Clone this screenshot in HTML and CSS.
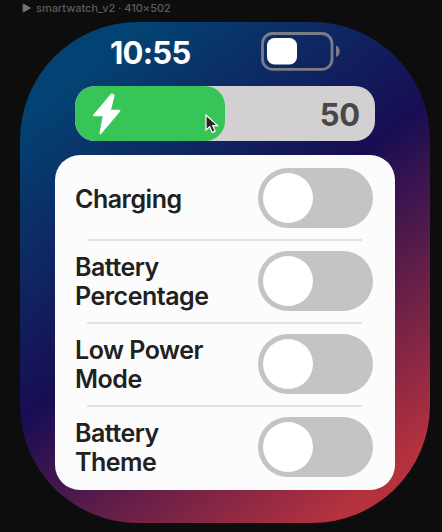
FILE: index.html
```html
<!DOCTYPE html>
<html lang="en">
<head>
<meta charset="utf-8">
<title>Smartwatch battery</title>
<link rel="stylesheet" href="styles.css">
</head>
<body>
<header class="frame-label">
  <svg class="play" viewBox="0 0 10 12"><path d="M1.2 2 8.3 6 1.2 10Z" fill="#747474" stroke="#747474" stroke-linejoin="round"/></svg>
  <span class="frame-name">smartwatch_v2 · 410×502</span>
</header>
<main class="watch">
  <div class="status">
    <time class="clock">10:55</time>
    <svg class="battery" viewBox="0 0 80 40">
      <rect x="1.5" y="1.5" width="69.5" height="35.8" rx="10" fill="none" stroke="#7c7c86" stroke-width="2.8"/>
      <rect x="6" y="6" width="30" height="26.5" rx="7.5" fill="#fff"/>
      <path d="M75 13.5C80 15.5 80 23 75 25Z" fill="#7c7c86"/>
    </svg>
  </div>
  <div class="level">
    <div class="level-fill">
      <svg class="bolt" viewBox="0 0 28 42"><path d="M18.8 1.3 1 22.3H10.8L7.5 40.2 26.3 17.8H16.8L20.6 2.5Z" fill="#fff" stroke="#fff" stroke-width="2" stroke-linejoin="round"/></svg>
    </div>
    <span class="level-value">50</span>
  </div>
  <section class="card">
    <div class="row"><span class="name">Charging</span><span class="toggle"></span></div>
    <div class="row"><span class="name">Battery<br>Percentage</span><span class="toggle"></span></div>
    <div class="row"><span class="name">Low Power<br>Mode</span><span class="toggle"></span></div>
    <div class="row"><span class="name">Battery<br>Theme</span><span class="toggle"></span></div>
  </section>
</main>
<svg class="cursor" viewBox="0 0 14 20"><path d="M1 1V16L4.7 12.7 7.3 18.4 10.2 17.1 7.7 11.6H12.5Z" fill="#2b2328" stroke="#fff" stroke-width="1.2"/></svg>
</body>
</html>
```
FILE: styles.css
```css
* { box-sizing: border-box; }
body {
  margin: 0;
  width: 442px;
  height: 532px;
  overflow: hidden;
  background: #0d0d0d;
  font-family: Inter, "Liberation Sans", sans-serif;
}
svg { display: block; }
.frame-label {
  display: flex;
  align-items: center;
  gap: 4px;
  height: 22px;
  padding: 0 0 6px 22px;
  color: #5c5c5c;
  font-size: 11px;
  font-weight: 500;
  letter-spacing: -0.03px;
  line-height: 16px;
}
.play { width: 10px; height: 12px; }
.watch {
  width: 410px;
  height: 501px;
  margin-left: 20px;
  padding: 10px 35px 0;
  border-radius: 118px;
  background: linear-gradient(142deg, #034373 12%, #180d53 48.5%, #b5313e 90%);
}
.status {
  display: flex;
  justify-content: space-between;
  height: 54.4px;
  padding: 0 54px 0 55px;
}
.clock {
  color: #fff;
  font-size: 31px;
  font-weight: 650;
  letter-spacing: -0.75px;
  line-height: 42px;
}
.battery { width: 80px; height: 40px; }
.level {
  display: flex;
  align-items: center;
  justify-content: space-between;
  width: 300px;
  height: 55px;
  margin-left: 20px;
  padding-right: 15px;
  border-radius: 20px;
  background: #d2d0d1;
  overflow: hidden;
}
.level-fill {
  display: flex;
  align-items: center;
  width: 150px;
  height: 55px;
  padding-left: 17.5px;
  border-radius: 20px;
  background: #38c558;
}
.bolt { width: 28px; height: 42px; }
.level-value {
  padding-top: 2px;
  color: #484848;
  font-size: 31px;
  font-weight: 650;
  letter-spacing: -0.2px;
}
.card {
  width: 340px;
  height: 335px;
  margin-top: 13.9px;
  padding: 13px 22px 13px 20px;
  border-radius: 25px;
  background: #fcfcfc;
}
.row {
  display: flex;
  align-items: center;
  justify-content: space-between;
  height: 60px;
}
.row + .row { margin-top: 23px; }
.row + .row::before {
  content: "";
  position: absolute;
  width: 275px;
  height: 2px;
  margin: -83px 0 0 12px;
  background: #e3e3e4;
}
.name {
  padding-top: 2px;
  color: #212121;
  font-size: 25px;
  font-weight: 600;
  letter-spacing: -0.5px;
  line-height: 29px;
}
.toggle {
  width: 115px;
  height: 60px;
  padding: 5px;
  border-radius: 30px;
  background: #c4c4c6;
}
.toggle::before {
  content: "";
  display: block;
  width: 50px;
  height: 50px;
  border-radius: 50%;
  background: #fff;
}
.cursor {
  position: absolute;
  left: 204.5px;
  top: 114px;
  width: 14px;
  height: 20px;
}
```
